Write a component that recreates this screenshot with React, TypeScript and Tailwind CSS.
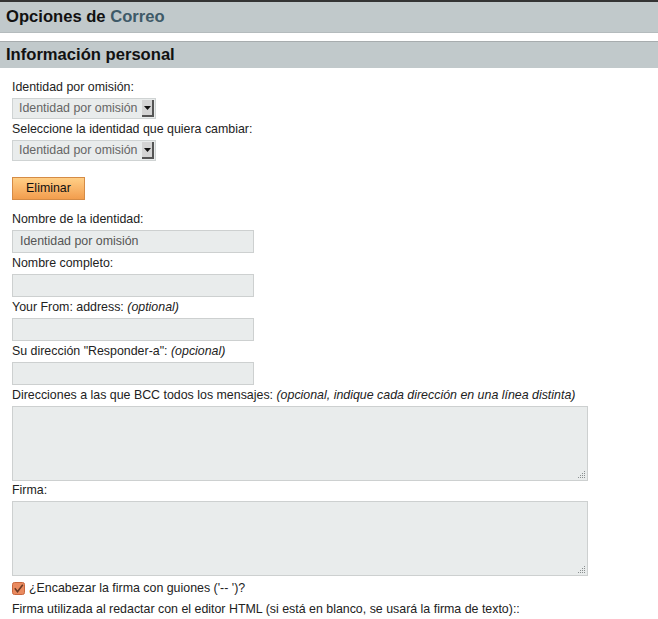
import { ReactNode } from 'react'

function Label({ children, hint, className = 'mt-[3px]' }: { children: ReactNode; hint?: string; className?: string }) {
  return (
    <div className={`${className} mb-[3px] leading-[15px]`}>
      {children}
      {hint && <i> {hint}</i>}
    </div>
  )
}

function Select() {
  return (
    <div className="flex h-[21px] w-[144px] items-stretch border border-[#cfd3d3] bg-[#e9ecec]">
      <span className="flex-1 truncate pl-[6px] leading-[19px] text-[#666]">Identidad por omisión</span>
      <span className="my-[1px] mr-[1px] flex w-[12px] items-center justify-center border-r-2 border-b-2 border-r-[#555] border-b-[#555] bg-[#d4d4d4]">
        <svg width="7" height="4" viewBox="0 0 7 4">
          <path d="M0 0h7L3.5 4z" fill="#111" />
        </svg>
      </span>
    </div>
  )
}

function Input({ value }: { value?: string }) {
  return (
    <div className="h-[23px] w-[242px] border border-[#cdd0d0] bg-[#e9ecec] pl-[7px] leading-[21px] text-[#555]">
      {value}
    </div>
  )
}

function Area() {
  return (
    <div className="relative h-[75px] w-[576px] border border-[#cdd0d0] bg-[#e9ecec]">
      <svg className="absolute right-[1px] bottom-[1px]" width="10" height="10" viewBox="0 0 10 10">
        {[
          [8, 2],
          [6, 4],
          [8, 4],
          [4, 6],
          [6, 6],
          [8, 6],
          [2, 8],
          [4, 8],
          [6, 8],
          [8, 8],
        ].map(([x, y]) => (
          <rect key={`${x}-${y}`} x={x} y={y} width="1" height="1" fill="#8a8f90" />
        ))}
      </svg>
    </div>
  )
}

export default function App() {
  return (
    <div className="min-h-[619px] bg-white text-[12.4px] text-[#222]" style={{ fontFamily: '"Liberation Sans", Arial, sans-serif' }}>
      <div className="flex h-[33px] items-center border-t-2 border-[#343434] bg-[#c1c9cb] px-[6px] text-[16.6px] font-bold text-[#111] shadow-[inset_0_-1px_0_#b4bbbd]">
        Opciones de&nbsp;<span className="text-[#3e5a68]">Correo</span>
      </div>
      <div className="mt-[8px] flex h-[27px] items-center border-t border-[#a7acae] bg-[#c1c9cb] px-[6px] text-[16.6px] font-bold text-[#111]">
        Información personal
      </div>

      <div className="px-[12px] pt-[9px]">
        <Label>Identidad por omisión:</Label>
        <Select />
        <Label>Seleccione la identidad que quiera cambiar:</Label>
        <Select />

        <button className="mt-[16px] h-[23px] w-[73px] border border-[#d58b45] bg-gradient-to-b from-[#ffcf86] to-[#f29d4d] text-[12.4px] text-[#111]">
          Eliminar
        </button>

        <div className="mt-[12px]" />
        <Label>Nombre de la identidad:</Label>
        <Input value="Identidad por omisión" />
        <Label>Nombre completo:</Label>
        <Input />
        <Label hint="(optional)">Your From: address:</Label>
        <Input />
        <Label hint="(opcional)">Su dirección "Responder-a":</Label>
        <Input />
        <Label hint="(opcional, indique cada dirección en una línea distinta)">
          Direcciones a las que BCC todos los mensajes:
        </Label>
        <Area />
        <Label className="mt-[2px]">Firma:</Label>
        <Area />

        <div className="mt-[5px] flex items-center gap-[4px] leading-[15px]">
          <svg width="13" height="13" viewBox="0 0 13 13">
            <rect x="0.5" y="0.5" width="12" height="12" rx="2" fill="#e98a5f" stroke="#c8673e" />
            <path d="M2.8 6.3l2.7 3.4L10.8 2.8" fill="none" stroke="#6b3a24" strokeWidth="1.6" />
          </svg>
          <span>¿Encabezar la firma con guiones ('-- ')?</span>
        </div>
        <div className="mt-[6px] leading-[15px]">
          Firma utilizada al redactar con el editor HTML (si está en blanco, se usará la firma de texto)::
        </div>
      </div>
    </div>
  )
}
